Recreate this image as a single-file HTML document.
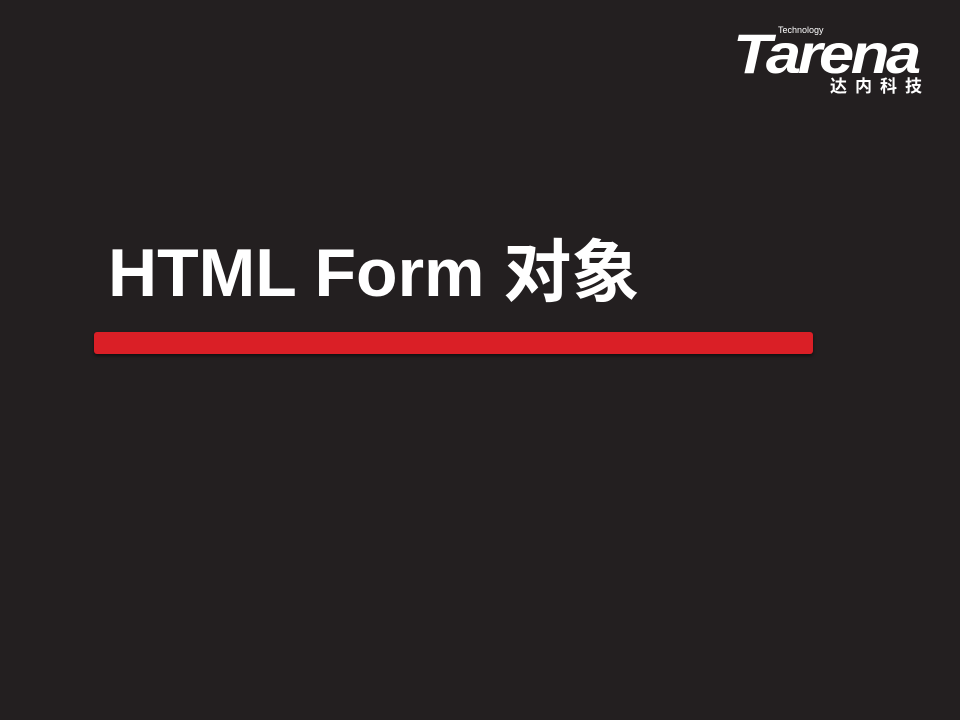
<!DOCTYPE html>
<html><head><meta charset="utf-8"><style>
html,body{margin:0;padding:0}
body{width:960px;height:720px;background:#231f20;position:relative;overflow:hidden;font-family:"Liberation Sans","Noto Sans CJK SC",sans-serif}
.t{position:absolute;left:108px;top:228px;color:#fff;font-weight:bold;font-size:68px;line-height:90px;white-space:nowrap;letter-spacing:0px;font-family:"Liberation Sans","Noto Sans CJK SC",sans-serif}
.bar{position:absolute;left:94px;top:332px;width:719px;height:22px;background:#da1f26;border-radius:3px;box-shadow:0 2px 3px rgba(0,0,0,.5)}
.logo{position:absolute;left:733px;top:24px;color:#fff;font-weight:bold;font-style:italic;font-size:56px;line-height:60px;letter-spacing:-3px;transform:scaleX(1.13);transform-origin:0 0}
.tech{position:absolute;left:778px;top:25px;color:#fff;font-size:9px}
.cn{position:absolute;left:830px;top:75px;color:#fff;font-size:17px;font-weight:bold;letter-spacing:8px;font-family:"Noto Sans CJK SC",sans-serif;line-height:20px}
</style></head><body>
<div class="logo">Tarena</div>
<div class="tech">Technology</div>
<div class="cn">达内科技</div>
<div class="t">HTML Form 对象</div>
<div class="bar"></div>
</body></html>
